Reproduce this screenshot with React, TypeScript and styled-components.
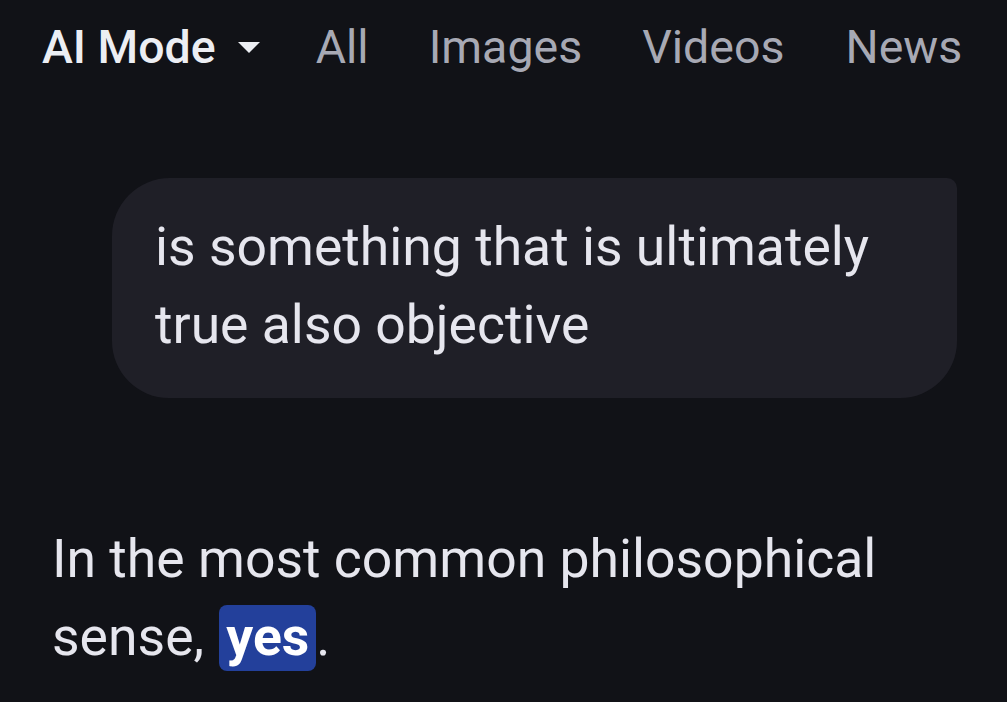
import React from "react";
import styled, { createGlobalStyle } from "styled-components";

const Global = createGlobalStyle`
  html, body { margin: 0; padding: 0; background: #111217; }
  body { font-family: Roboto, "Noto Sans", sans-serif; color: #e6e6ec; }
  #root { width: 1007px; height: 702px; overflow: hidden; }
`;

const Page = styled.div`
  width: 1007px;
  height: 702px;
  background: #111217;
  display: flex;
  flex-direction: column;
  overflow: hidden;
`;

const Nav = styled.nav`
  display: flex;
  align-items: center;
  height: 94px;
  padding-left: 42px;
`;

const Tab = styled.div<{ $active?: boolean; $gap: number }>`
  display: flex;
  align-items: center;
  font-size: 46.5px;
  font-weight: ${(p) => (p.$active ? 500 : 400)};
  color: ${(p) => (p.$active ? "#eceef3" : "#a7a9b4")};
  margin-right: ${(p) => p.$gap}px;
  white-space: nowrap;
`;

const Caret = styled.svg`
  margin-left: 22px;
`;

const Bubble = styled.div`
  margin: 84px 50px 0 112px;
  background: #1f1f27;
  border-radius: 58px 10px 57px 57px;
  padding: 30px 40px 34px 43px;
  font-size: 53.5px;
  line-height: 78px;
  color: #e6e6ee;
`;

const Answer = styled.p`
  margin: 122px 60px 0 52px;
  font-size: 53.5px;
  line-height: 78px;
  color: #e6e6ee;
`;

const Highlight = styled.span`
  background: #23409b;
  color: #ffffff;
  font-weight: 700;
  border-radius: 8px;
  padding: 0 7px 3px;
  margin-left: 2px;
`;

export default function App() {
  return (
    <Page>
      <Global />
      <Nav>
        <Tab $active $gap={56}>
          AI Mode
          <Caret width="22" height="11" viewBox="0 0 22 11">
            <path d="M0 0 L22 0 L11 11 Z" fill="#eceef3" />
          </Caret>
        </Tab>
        <Tab $gap={60}>All</Tab>
        <Tab $gap={60}>Images</Tab>
        <Tab $gap={61}>Videos</Tab>
        <Tab $gap={0}>News</Tab>
      </Nav>
      <Bubble>is something that is ultimately true also objective</Bubble>
      <Answer>
        In the most common philosophical sense, <Highlight>yes</Highlight>.
      </Answer>
    </Page>
  );
}
